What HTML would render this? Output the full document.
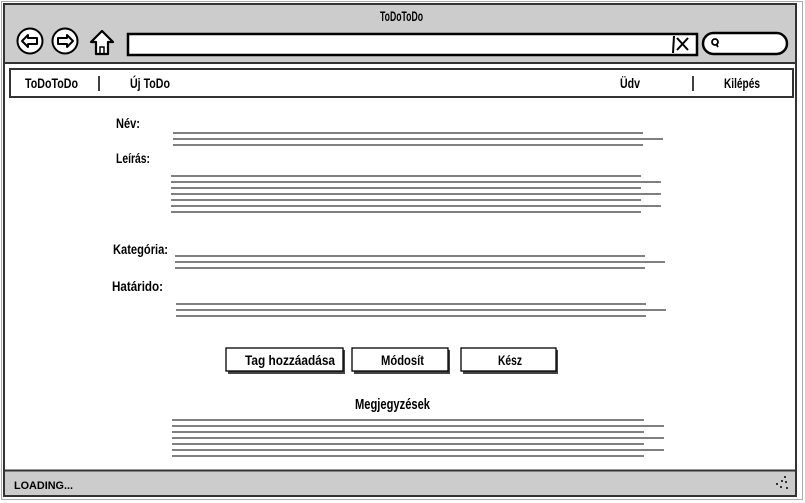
<!DOCTYPE html>
<html><head><meta charset="utf-8">
<style>
html,body{margin:0;padding:0;background:#fff;width:805px;height:503px;overflow:hidden}
svg text{font-family:"Liberation Sans Narrow","Liberation Sans",sans-serif;font-weight:bold;font-size:14px;fill:#000}
</style></head><body>
<svg width="805" height="503" viewBox="0 0 805 503" xmlns="http://www.w3.org/2000/svg">
<rect x="1.5" y="1.5" width="801" height="498" fill="#fff" stroke="#aaa" stroke-width="1"/>
<rect x="4" y="4" width="792" height="492" fill="#fff" stroke="#333" stroke-width="2"/>
<rect x="5" y="5" width="790" height="58" fill="#cccccc"/>
<line x1="4" y1="63" x2="796" y2="63" stroke="#333" stroke-width="2"/>
<text x="380" y="21" textLength="43" lengthAdjust="spacingAndGlyphs">ToDoToDo</text>
<circle cx="30" cy="41" r="12.5" fill="#fff" stroke="#000" stroke-width="2"/>
<path d="M22 41 L28 35 L28 38 L37 38 L37 44 L28 44 L28 47 Z" fill="none" stroke="#000" stroke-width="2" stroke-linejoin="round"/>
<circle cx="65" cy="41" r="12.5" fill="#fff" stroke="#000" stroke-width="2"/>
<path d="M73 41 L67 35 L67 38 L58 38 L58 44 L67 44 L67 47 Z" fill="none" stroke="#000" stroke-width="2" stroke-linejoin="round"/>
<path d="M102 31 L91 42 L96 42 L96 54 L108 54 L108 42 L113 42 Z" fill="#fff" stroke="#000" stroke-width="2.2" stroke-linejoin="round"/>
<path d="M100 54 L100 47 L104 47 L104 54" fill="none" stroke="#000" stroke-width="1.5"/>
<rect x="128" y="34" width="569" height="21" fill="#fff" stroke="#000" stroke-width="2.5"/>
<line x1="674" y1="36" x2="673" y2="53" stroke="#000" stroke-width="2"/>
<path d="M677 38 L688 50 M688 38 L677 50" stroke="#000" stroke-width="2"/>
<rect x="703" y="33" width="84" height="21" rx="10.5" fill="#fff" stroke="#000" stroke-width="2.5"/>
<circle cx="715" cy="42" r="3" fill="none" stroke="#000" stroke-width="1.8"/>
<line x1="716" y1="44" x2="718" y2="47" stroke="#000" stroke-width="1.8"/>
<rect x="10" y="69" width="783" height="28" fill="#fff" stroke="#333" stroke-width="2"/>
<text x="25" y="88" textLength="53" lengthAdjust="spacingAndGlyphs">ToDoToDo</text>
<line x1="99" y1="76" x2="99" y2="91" stroke="#000" stroke-width="1.5"/>
<text x="130" y="88" textLength="40" lengthAdjust="spacingAndGlyphs">Új ToDo</text>
<text x="620" y="88" textLength="20" lengthAdjust="spacingAndGlyphs">Üdv</text>
<line x1="693" y1="76" x2="693" y2="91" stroke="#000" stroke-width="1.5"/>
<text x="724" y="88" textLength="36" lengthAdjust="spacingAndGlyphs">Kilépés</text>
<text x="116" y="128" textLength="24" lengthAdjust="spacingAndGlyphs">Név:</text>
<text x="116" y="163" textLength="34" lengthAdjust="spacingAndGlyphs">Leírás:</text>
<text x="113" y="254" textLength="55" lengthAdjust="spacingAndGlyphs">Kategória:</text>
<text x="112" y="291" textLength="51" lengthAdjust="spacingAndGlyphs">Határido:</text>
<g stroke="#808080" stroke-width="2">
<line x1="173" y1="133" x2="643" y2="133"/><line x1="173" y1="139" x2="663" y2="139"/><line x1="173" y1="145" x2="643" y2="145"/>
<line x1="171" y1="176" x2="641" y2="176"/><line x1="171" y1="182" x2="661" y2="182"/><line x1="171" y1="188" x2="641" y2="188"/><line x1="171" y1="194" x2="661" y2="194"/><line x1="171" y1="200" x2="641" y2="200"/><line x1="171" y1="206" x2="661" y2="206"/><line x1="171" y1="212" x2="641" y2="212"/>
<line x1="175" y1="256" x2="645" y2="256"/><line x1="175" y1="262" x2="665" y2="262"/><line x1="175" y1="268" x2="645" y2="268"/>
<line x1="176" y1="304" x2="646" y2="304"/><line x1="176" y1="310" x2="666" y2="310"/><line x1="176" y1="316" x2="646" y2="316"/>
<line x1="172" y1="420" x2="644" y2="420"/><line x1="172" y1="426" x2="664" y2="426"/><line x1="172" y1="432" x2="644" y2="432"/><line x1="172" y1="438" x2="664" y2="438"/><line x1="172" y1="444" x2="644" y2="444"/><line x1="172" y1="450" x2="664" y2="450"/><line x1="172" y1="456" x2="644" y2="456"/>
</g>
<g fill="#444"><rect x="228" y="350" width="117" height="24"/><rect x="354" y="350" width="96" height="24"/><rect x="463" y="350" width="95" height="24"/></g>
<g fill="#fff" stroke="#000" stroke-width="1.3"><rect x="226" y="348" width="117" height="23"/><rect x="352" y="348" width="96" height="23"/><rect x="461" y="348" width="95" height="23"/></g>
<text x="245" y="365" textLength="90" lengthAdjust="spacingAndGlyphs">Tag hozzáadása</text>
<text x="381" y="365" textLength="43" lengthAdjust="spacingAndGlyphs">Módosít</text>
<text x="498" y="365" textLength="24" lengthAdjust="spacingAndGlyphs">Kész</text>
<text x="355" y="409" textLength="75" lengthAdjust="spacingAndGlyphs" style="font-size:15px">Megjegyzések</text>
<rect x="5" y="471" width="790" height="24" fill="#cccccc"/>
<line x1="4" y1="470.5" x2="796" y2="470.5" stroke="#333" stroke-width="2"/>
<text x="14" y="489" textLength="59" lengthAdjust="spacingAndGlyphs" style="font-size:11px">LOADING...</text>
<g fill="#000"><circle cx="785" cy="477" r="1"/><circle cx="782" cy="481" r="1"/><circle cx="786" cy="482" r="1"/><circle cx="777" cy="484" r="1"/><circle cx="781" cy="487" r="1"/><circle cx="787" cy="488" r="1"/></g>
</svg>
</body></html>
